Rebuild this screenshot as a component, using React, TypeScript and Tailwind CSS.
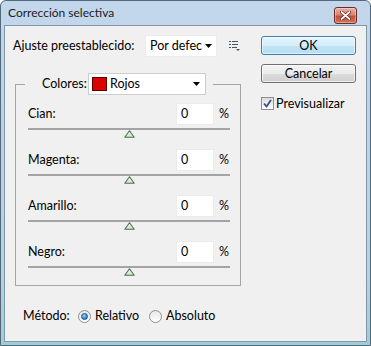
import React from 'react';

const channels = ['Cian:', 'Magenta:', 'Amarillo:', 'Negro:'];

function DropArrow() {
  return (
    <svg width="7" height="4" viewBox="0 0 7 4">
      <path d="M0 0h7L3.5 4z" fill="#000" />
    </svg>
  );
}

function MenuIcon() {
  return (
    <svg width="11" height="10" viewBox="0 0 11 10">
      <g fill="#4a5564">
        <rect x="0" y="0" width="2" height="1" />
        <rect x="3" y="0" width="6" height="1" />
        <rect x="0" y="3" width="2" height="1" />
        <rect x="3" y="3" width="6" height="1" />
        <rect x="0" y="6" width="2" height="1" />
        <rect x="3" y="6" width="5" height="1" />
        <path d="M7 8h4l-2 2z" />
      </g>
    </svg>
  );
}

function Thumb() {
  return (
    <svg width="11" height="8" viewBox="0 0 11 8">
      <defs>
        <linearGradient id="thumbFill" x1="0" y1="0" x2="0" y2="1">
          <stop offset="0" stopColor="#f6fbf3" />
          <stop offset="1" stopColor="#cfe0c6" />
        </linearGradient>
      </defs>
      <path d="M5.5 0.8L10.2 7.3H0.8Z" fill="url(#thumbFill)" stroke="#4b744d" strokeWidth="1.1" strokeLinejoin="round" />
    </svg>
  );
}

function CloseButton() {
  return (
    <div className="mt-[6px] mr-[10px] ml-auto flex h-[17px] w-[23px] items-center justify-center self-start rounded-[3px] border border-[#6b2a22] bg-[linear-gradient(to_bottom,#e8b0a4_0%,#d98572_45%,#c4503a_55%,#d2735a_100%)] shadow-[inset_0_0_0_1px_rgba(255,255,255,0.35)]">
      <svg width="11" height="9" viewBox="0 0 11 9">
        <path d="M1.5 1L9.5 8M9.5 1L1.5 8" stroke="#5a1c14" strokeWidth="3.2" strokeLinecap="round" />
        <path d="M1.5 1L9.5 8M9.5 1L1.5 8" stroke="#fff" strokeWidth="1.8" strokeLinecap="round" />
      </svg>
    </div>
  );
}

function ChannelRow({ label }: { label: string }) {
  return (
    <div className="flex flex-col">
      <div className="flex h-[22px] items-center">
        <span className="flex-1">{label}</span>
        <div className="flex h-[22px] w-[38px] items-center border border-[#ebebeb] bg-white pl-[4px]">0</div>
        <span className="w-[16px] pl-[5px]">%</span>
      </div>
      <div className="flex h-[14px] flex-col">
        <div className="mt-[3px] h-[2px] bg-[#a4a4a4]" />
        <div className="flex justify-center">
          <Thumb />
        </div>
      </div>
    </div>
  );
}

function Radio({ checked }: { checked?: boolean }) {
  return (
    <div className="flex h-[13px] w-[13px] items-center justify-center rounded-full border border-[#8e8f8f] bg-[linear-gradient(to_bottom,#e6e6e6,#ffffff)]">
      {checked && (
        <div className="h-[7px] w-[7px] rounded-full border border-[#1c4e8a] bg-[radial-gradient(circle_at_40%_35%,#a8dcf8_0%,#3c8ed2_55%,#195fa8_100%)]" />
      )}
    </div>
  );
}

export default function App() {
  return (
    <div className="flex h-[346px] w-[371px] flex-col rounded-t-[6px] border border-[#53697b] bg-[linear-gradient(to_bottom,#c3d7ec_0%,#bcd3e9_30%,#b3d3e0_80%,#9fcdd5_100%)] px-[3px] pb-[3px] font-['Lato',sans-serif] text-[12.5px] leading-[16px] text-black">
      <div className="flex h-[24px] items-center pl-[4px]">
        <span className="text-[12px] text-[#1b1b1b]">Corrección selectiva</span>
        <CloseButton />
      </div>
      <div className="flex flex-1 border border-[#7f97a8] bg-[#f0f0f0]">
        <div className="flex w-[256px] flex-col">
          <div className="mt-[9px] ml-[8px] flex h-[22px] items-center">
            <span className="w-[132px]">Ajuste preestablecido:</span>
            <div className="flex h-[22px] w-[72px] items-center justify-between border border-[#ececec] bg-white pr-[4px] pl-[4px]">
              <span>Por defec</span>
              <DropArrow />
            </div>
            <div className="ml-[12px] flex items-center">
              <MenuIcon />
            </div>
          </div>

          <fieldset className="mt-[16px] ml-[10px] w-[226px] border border-[#a3a3a3] pt-[8px] pr-[10px] pb-[8px] pl-[12px]">
            <legend className="-ml-[3px] pr-[7px] pl-[17px]">
              <div className="flex h-[22px] items-center">
                <span className="w-[46px]">Colores:</span>
                <div className="flex h-[22px] w-[118px] items-center border border-[#cdcdcd] bg-white pr-[5px] pl-[3px]">
                  <div className="h-[14px] w-[15px] border border-[#5a0000] bg-[#dd0000]" />
                  <span className="ml-[3px] flex-1">Rojos</span>
                  <DropArrow />
                </div>
              </div>
            </legend>
            <div className="flex flex-col gap-[10px]">
              {channels.map((c) => (
                <ChannelRow key={c} label={c} />
              ))}
            </div>
          </fieldset>

          <div className="mt-[22px] ml-[18px] flex h-[16px] items-center">
            <span className="w-[55px]">Método:</span>
            <Radio checked />
            <span className="ml-[4px] w-[54px]">Relativo</span>
            <Radio />
            <span className="ml-[4px]">Absoluto</span>
          </div>
        </div>

        <div className="flex w-[95px] flex-col pt-[10px]">
          <button className="h-[19px] rounded-[3px] border border-[#3c7fb1] bg-[linear-gradient(to_bottom,#e6f5fc_0%,#d3edf9_50%,#c2e5f7_51%,#b3def4_100%)] shadow-[inset_0_0_0_1px_rgba(255,255,255,0.6)] leading-[16px]">
            OK
          </button>
          <button className="mt-[9px] h-[19px] rounded-[3px] border border-[#707070] bg-[linear-gradient(to_bottom,#f2f2f2_0%,#ebebeb_50%,#dddddd_51%,#cfcfcf_100%)] shadow-[inset_0_0_0_1px_rgba(255,255,255,0.7)] leading-[16px]">
            Cancelar
          </button>
          <div className="mt-[14px] flex h-[13px] items-center">
            <div className="flex h-[13px] w-[13px] items-center justify-center border border-[#8e8f8f] bg-[linear-gradient(to_bottom,#dcdcdc,#ffffff)]">
              <svg width="9" height="9" viewBox="0 0 9 9">
                <path d="M1 4.5L3.5 7.5L8 1" fill="none" stroke="#3b4f8c" strokeWidth="1.8" />
              </svg>
            </div>
            <span className="ml-[2px]">Previsualizar</span>
          </div>
        </div>
      </div>
    </div>
  );
}
